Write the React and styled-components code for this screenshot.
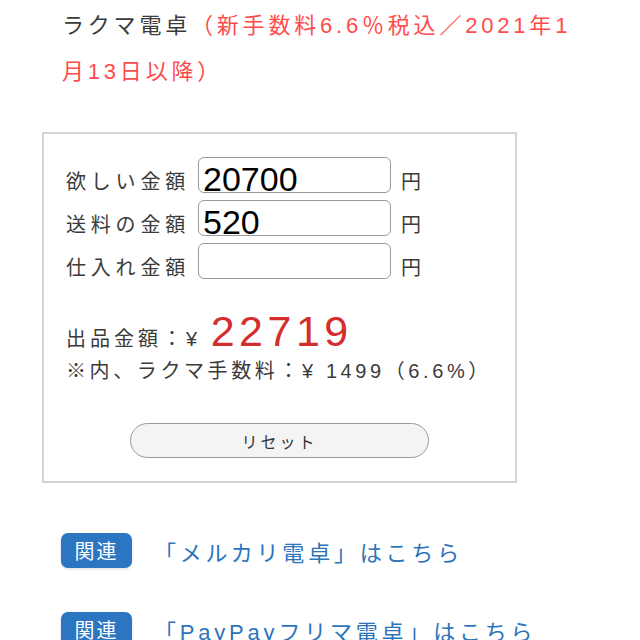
import styled, { createGlobalStyle } from "styled-components";

const Global = createGlobalStyle`
body {
  margin: 0;
  background: #fff;
  font-family: "Liberation Sans", "Noto Sans CJK JP", sans-serif;
  color: #333;
}
`

const App = () => {
  return (
    <Page>
      <Global />
      <Title>
        ラクマ電卓<Note>（新手数料6.6％税込／2021年1<br />月13日以降）</Note>
      </Title>
      <CalcBox>
        <Row>
          <Label>欲しい金額</Label>
          <Field defaultValue="20700" />
          <Unit>円</Unit>
        </Row>
        <Row>
          <Label>送料の金額</Label>
          <Field defaultValue="520" />
          <Unit>円</Unit>
        </Row>
        <Row>
          <Label>仕入れ金額</Label>
          <Field defaultValue="" />
          <Unit>円</Unit>
        </Row>
        <Result>
          出品金額：¥ <Price>22719</Price>
        </Result>
        <Fee>※内、ラクマ手数料：¥ 1499（6.6%）</Fee>
        <ResetBtn type="button">リセット</ResetBtn>
      </CalcBox>
      <Related>
        <Badge>関連</Badge>
        <RelLink href="#">「メルカリ電卓」はこちら</RelLink>
      </Related>
      <Related>
        <Badge>関連</Badge>
        <RelLink href="#">「PayPayフリマ電卓」はこちら</RelLink>
      </Related>
    </Page>
  )
}

const Page = styled.div`
width: 640px;
height: 640px;
overflow: hidden;
padding: 0 0 0 42px;
box-sizing: border-box;
`
const Title = styled.div`
padding-left: 20px;
font-size: 22px;
line-height: 46px;
letter-spacing: 3.8px;
color: #3b3b3b;
margin-top: 3px;
`
const Note = styled.span`
color: #ff4b4b;
`
const CalcBox = styled.div`
margin-top: 37px;
width: 475px;
box-sizing: border-box;
border: 2px solid #d4d4d4;
padding: 23px 22px 23px 22px;
display: flex;
flex-direction: column;
`
const Row = styled.div`
display: flex;
align-items: flex-end;
margin-bottom: 7px;
`
const Label = styled.span`
width: 132px;
font-size: 20px;
line-height: 22px;
letter-spacing: 4.8px;
padding-bottom: 0;
color: #3b3b3b;
`
const Field = styled.input`
width: 193px;
height: 36px;
box-sizing: border-box;
border: 1px solid #9a9a9a;
border-radius: 6px;
padding: 8px 4px 0;
font-family: "Liberation Sans", sans-serif;
font-size: 34px;
color: #000;
outline: none;
`
const Unit = styled.span`
margin-left: 10px;
font-size: 20px;
line-height: 22px;
color: #3b3b3b;
`
const Result = styled.div`
margin-top: 25px;
font-size: 20px;
line-height: 40px;
letter-spacing: 4px;
color: #3b3b3b;
`
const Price = styled.span`
font-size: 43px;
letter-spacing: 4.5px;
color: #d42d2d;
`
const Fee = styled.div`
margin-top: -3px;
font-size: 20px;
line-height: 30px;
letter-spacing: 3.6px;
color: #3b3b3b;
`
const ResetBtn = styled.button`
align-self: center;
margin-top: 37px;
width: 299px;
height: 35px;
border: 1px solid #9a9a9a;
border-radius: 18px;
background: #f4f4f4;
font-family: "Liberation Sans", "Noto Sans CJK JP", sans-serif;
font-size: 16px;
letter-spacing: 3px;
color: #333;
`
const Related = styled.div`
display: flex;
align-items: center;
margin: 50px 0 0 19px;
& + & {
  margin-top: 44px;
}
`
const Badge = styled.span`
width: 71px;
height: 35px;
display: flex;
align-items: center;
justify-content: center;
background: #2b75c1;
border-radius: 7px;
box-shadow: 0 1px 3px rgba(0, 0, 0, 0.15);
color: #fff;
font-size: 20px;
letter-spacing: 2px;
`
const RelLink = styled.a`
margin-left: 22px;
font-size: 22px;
letter-spacing: 3.8px;
color: #2c74bb;
text-decoration: none;
`

export default App;
